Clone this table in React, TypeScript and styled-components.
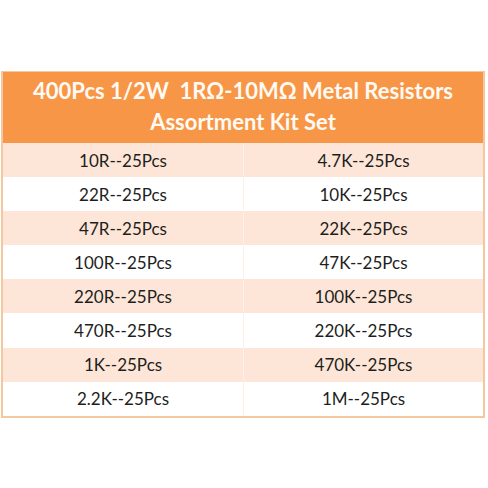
import React from "react";
import styled, { createGlobalStyle } from "styled-components";

const Global = createGlobalStyle`
  html, body { margin: 0; padding: 0; background: #ffffff; }
  body { width: 488px; height: 488px; overflow: hidden; }
`;

const Page = styled.div`
  width: 488px;
  height: 488px;
  padding: 71px 3px 0 1px;
  box-sizing: border-box;
  font-family: "Lato", "Open Sans", sans-serif;
`;

const Table = styled.div`
  border: 1px solid #f3c8a0;
  border-left-width: 2px;
  border-right-width: 2px;
  border-bottom-width: 2px;
  display: flex;
  flex-direction: column;
`;

const Header = styled.div`
  background: #f79646;
  height: 71px;
  display: flex;
  flex-direction: column;
  align-items: center;
  justify-content: center;
  color: #fffaf3;
  font-weight: 700;
  font-size: 22px;
  line-height: 31px;
  white-space: pre;
  padding-bottom: 3px;
  box-sizing: border-box;
`;

const Row = styled.div<{ $shade: boolean }>`
  display: grid;
  grid-template-columns: 1fr 1fr;
  height: 34.1px;
  background: ${(p) => (p.$shade ? "#fde6d7" : "#ffffff")};
`;

const Cell = styled.div<{ $divider?: boolean }>`
  display: flex;
  align-items: center;
  justify-content: center;
  font-size: 17px;
  color: #1e1e1e;
  border-left: ${(p) => (p.$divider ? "1px solid #fcf1e8" : "none")};
`;

const rows: [string, string][] = [
  ["10R--25Pcs", "4.7K--25Pcs"],
  ["22R--25Pcs", "10K--25Pcs"],
  ["47R--25Pcs", "22K--25Pcs"],
  ["100R--25Pcs", "47K--25Pcs"],
  ["220R--25Pcs", "100K--25Pcs"],
  ["470R--25Pcs", "220K--25Pcs"],
  ["1K--25Pcs", "470K--25Pcs"],
  ["2.2K--25Pcs", "1M--25Pcs"],
];

export default function App() {
  return (
    <>
      <Global />
      <Page>
        <Table>
          <Header>
            <div>{"400Pcs 1/2W  1RΩ-10MΩ Metal Resistors"}</div>
            <div>Assortment Kit Set</div>
          </Header>
          {rows.map((r, i) => (
            <Row key={i} $shade={i % 2 === 0}>
              <Cell>{r[0]}</Cell>
              <Cell $divider>{r[1]}</Cell>
            </Row>
          ))}
        </Table>
      </Page>
    </>
  );
}
